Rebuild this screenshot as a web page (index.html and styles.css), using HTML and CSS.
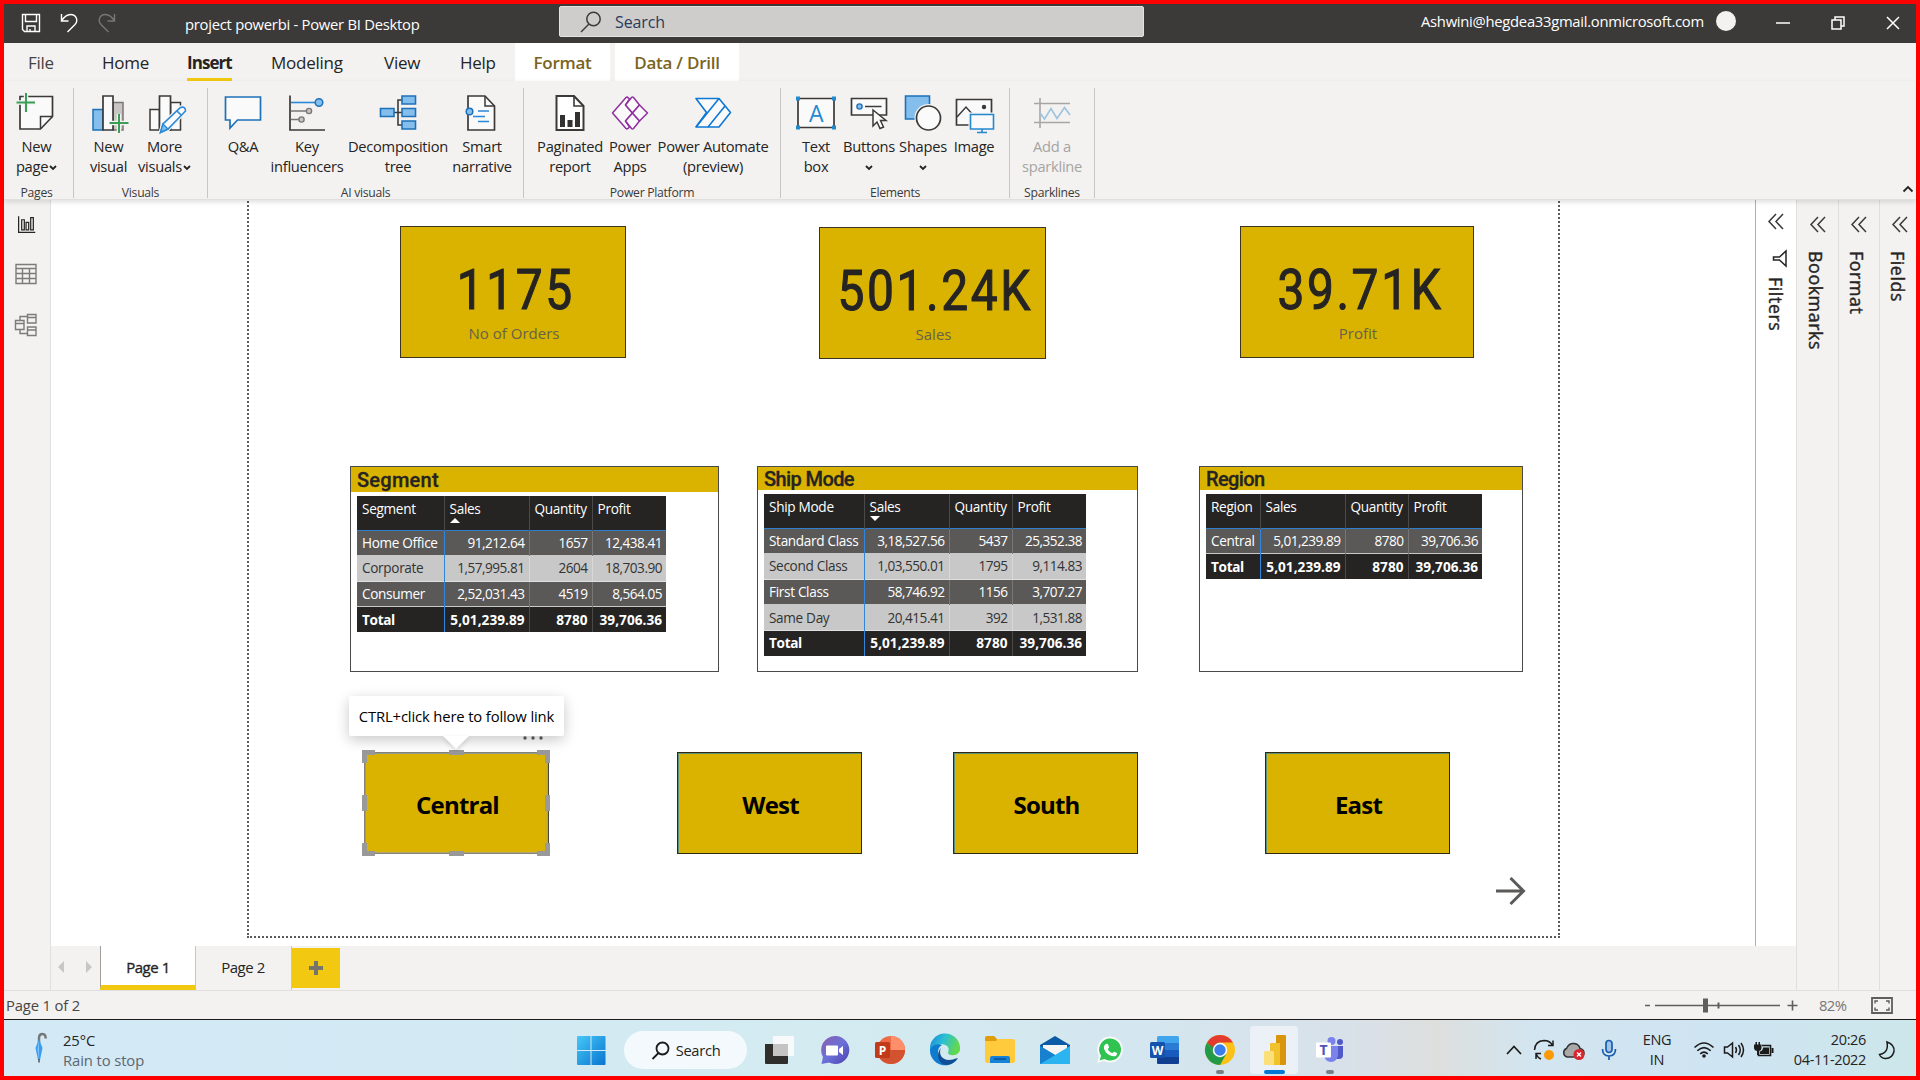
FILE: index.html
```html
<!DOCTYPE html>
<html lang="en">
<head>
<meta charset="utf-8">
<title>project powerbi - Power BI Desktop</title>
<link rel="stylesheet" href="styles.css">
</head>
<body>
<div class="screen">
  <header class="titlebar">
    <div class="quick">
      <svg width="20" height="20" viewBox="0 0 20 20"><path d="M1.5 1.5h17v17h-15l-2-2zM4.500 1.500v7h11v-7M6 18.500v-5.500h8v5.500M9 18v-2"/></svg>
      <svg width="20" height="20" viewBox="0 0 20 20"><path d="M2.500 1v7h7M2.500 8C5 4 8 1.500 11.500 1.500c6 0 8 6 4.500 10L8.500 19"/></svg>
      <svg class="dim" width="20" height="20" viewBox="0 0 20 20"><path d="M17.500 1v7h-7M17.500 8C15 4 12 1.500 8.500 1.500c-6 0-8 6-4.500 10l7.500 7.500"/></svg>
    </div>
    <div class="apptitle">project powerbi - Power BI Desktop</div>
    <div class="search">
      <svg width="22" height="22" viewBox="0 0 22 22"><circle cx="13.500" cy="8" r="6.700"/><path d="M9 13l-8 8"/></svg>
      <span>Search</span>
    </div>
    <div class="account">Ashwini@hegdea33gmail.onmicrosoft.com</div>
    <div class="avatar"></div>
    <div class="winbtns">
      <svg width="14" height="14" viewBox="0 0 14 14"><path d="M0 7h14"/></svg>
      <svg width="14" height="14" viewBox="0 0 14 14"><path d="M1 4h9v9h-9zM4 4v-3h9v9h-3"/></svg>
      <svg width="14" height="14" viewBox="0 0 14 14"><path d="M1 1l12 12M13 1l-12 12"/></svg>
    </div>
  </header>

  <nav class="tabs">
    <span class="tab t-file">File</span>
    <span class="tab t-home">Home</span>
    <span class="tab t-insert">Insert</span>
    <span class="tab t-modeling">Modeling</span>
    <span class="tab t-view">View</span>
    <span class="tab t-help">Help</span>
    <span class="tab ctx t-format">Format</span>
    <span class="tab ctx t-data">Data / Drill</span>
  </nav>

  <section class="ribbon">
    <div class="group g-pages">
      <div class="items">
        <div class="item w65">
          <svg class="ico" viewBox="-22 0 44 42"><path d="M-17 3.500H15.500V23.500L3.500 36H-17z" fill="#fafafa" stroke="#3b3a39" stroke-width="1.700"/><path d="M3.500 36V23.500H15.500" fill="none" stroke="#3b3a39" stroke-width="1.500"/><path d="M-20.500 9.500h18.500M-11 0v19" stroke="#f3f2f1" stroke-width="4.500"/><path d="M-20.500 9.500h18.500M-11 0v19" stroke="#3a9e57" stroke-width="2"/></svg>
          <span>New</span><span>page<svg class="chev" viewBox="0 0 8 6"><path d="M1 1l3 3 3-3"/></svg></span>
        </div>
      </div>
      <div class="gname">Pages</div>
    </div>
    <div class="group g-visuals">
      <div class="items">
        <div class="item w48">
          <svg class="ico" viewBox="-22 0 44 42"><path d="M-16 16.500h10V37h-10z" fill="#83beec" stroke="#1e71b8" stroke-width="1.500"/><path d="M4 9.500h10V37H4z" fill="#c8c6c4" stroke="#797775" stroke-width="1.500"/><path d="M-6 3H4V37H-6z" fill="#fafafa" stroke="#3b3a39" stroke-width="1.700"/><path d="M.5 30h19M10 21v19" stroke="#f3f2f1" stroke-width="4.500"/><path d="M.5 30h19M10 21v19" stroke="#3a9e57" stroke-width="2"/></svg>
          <span>New</span><span>visual</span>
        </div>
        <div class="item w64">
          <svg class="ico" viewBox="-22 0 44 42"><path d="M-15 16.500h9.500V37H-15zM5.500 9.500h10V37h-10z" fill="#fafafa" stroke="#3b3a39" stroke-width="1.500"/><path d="M-5.500 3h11V37h-11z" fill="#fafafa" stroke="#3b3a39" stroke-width="1.700"/><path d="M-4.500 39.500L-2 31 15.500 14.500q5-1.500 5 3.500L3 36z" fill="#fafafa" stroke="#f3f2f1" stroke-width="4"/><path d="M-4.500 39.500L-2 31 15.500 14.500q5-1.500 5 3.500L3 36zM12 18l4.500 4.500" fill="#fafafa" stroke="#2b88d8" stroke-width="1.600"/><path d="M-4.500 39.500L-2 31l5 5z" fill="#83beec" stroke="#2b88d8" stroke-width="1.400"/></svg>
          <span>More</span><span>visuals<svg class="chev" viewBox="0 0 8 6"><path d="M1 1l3 3 3-3"/></svg></span>
        </div>
      </div>
      <div class="gname">Visuals</div>
    </div>
    <div class="group g-ai">
      <div class="items">
        <div class="item w54">
          <svg class="ico" viewBox="-22 0 44 42"><path d="M-17.500 4h35V27H-5.500L-13 35v-8h-4.500z" fill="#fafafa" stroke="#1e71b8" stroke-width="1.700"/></svg>
          <span>Q&amp;A</span>
        </div>
        <div class="item w74">
          <svg class="ico" viewBox="-22 0 44 42"><path d="M-17 2.500V37H18" fill="none" stroke="#3b3a39" stroke-width="1.700"/><path d="M-16 9.500H9" stroke="#2b88d8" stroke-width="1.600"/><path d="M-16 18H0M-16 26.500h8" stroke="#797775" stroke-width="1.600"/><circle cx="12" cy="9.500" r="3.800" fill="#83beec" stroke="#1e71b8" stroke-width="1.500"/><g fill="#c8c6c4" stroke="#797775" stroke-width="1.400"><circle cx="2" cy="18" r="2.600"/><circle cx="-5.500" cy="26.500" r="2.600"/></g></svg>
          <span>Key</span><span>influencers</span>
        </div>
        <div class="item w108">
          <svg class="ico" viewBox="-22 0 44 42"><path d="M-4 19.500H5M5 7H0V32H5" fill="none" stroke="#3b3a39" stroke-width="1.600"/><path d="M-17.500 15.500h13.500v8h-13.500zM4 3h13.500v8H4zM4 15.500h13.500v8H4zM4 28h13.500v8H4z" fill="#83beec" stroke="#1e71b8" stroke-width="1.600"/></svg>
          <span>Decomposition</span><span>tree</span>
        </div>
        <div class="item w60">
          <svg class="ico" viewBox="-22 0 44 42"><path d="M-14 3H3L12.500 13V37H-14z" fill="#fafafa" stroke="#3b3a39" stroke-width="1.700"/><path d="M3 3v10h9.500" fill="none" stroke="#3b3a39" stroke-width="1.500"/><path d="M-4 18H7M-9 23.500H3M-4 28.500H7" stroke="#2b88d8" stroke-width="1.600"/><circle cx="-12.500" cy="18.500" r="3.300" fill="#83beec" stroke="#1e71b8" stroke-width="1.500"/></svg>
          <span>Smart</span><span>narrative</span>
        </div>
      </div>
      <div class="gname">AI visuals</div>
    </div>
    <div class="group g-platform">
      <div class="items">
        <div class="item w68">
          <svg class="ico" viewBox="-22 0 44 42"><path d="M-13.500 3H4L13.500 13V37h-27z" fill="#fff" stroke="#3b3a39" stroke-width="2"/><path d="M4 3v10h9.500" fill="none" stroke="#3b3a39" stroke-width="1.600"/><path d="M-10 22h5V34h-5zM-2.500 27h5v7h-5zM5 19h5V34H5z" fill="#323130"/></svg>
          <span>Paginated</span><span>report</span>
        </div>
        <div class="item w52">
          <svg class="ico" viewBox="-22 0 44 42"><g fill="#fafafa" stroke="#8f2f9e" stroke-width="1.500" stroke-linejoin="round"><path d="M-4 4.500Q-3 3.500-1.500 5L-.5 6-4.500 12 2.500 20-4.500 28l4 6-1 1Q-3 36.500-4 35.500L-17.500 20z"/><path d="M1.500 4.500q1-1 2 0L9.500 12 2.500 20-4.500 12z"/><path d="M2.500 20l7 8-6 7.500q-1 1-2 0L-4.500 28z"/><path d="M9.500 12l8 8-8 8-7-8z"/></g></svg>
          <span>Power</span><span>Apps</span>
        </div>
        <div class="item w114">
          <svg class="ico" viewBox="-22 0 44 42"><g fill="#fafafa" stroke="#0f78d4" stroke-width="1.600" stroke-linejoin="round"><path d="M-17 5.500H6L17.500 19.500 6 34h-23L-6.500 19.500z"/><path d="M6 5.500L-17 34M12 13L-5 34" fill="none"/></g></svg>
          <span>Power Automate</span><span>(preview)</span>
        </div>
      </div>
      <div class="gname">Power Platform</div>
    </div>
    <div class="group g-elements">
      <div class="items">
        <div class="item w56">
          <svg class="ico" viewBox="-22 0 44 42"><path d="M-18 5.500h36v29h-36z" fill="#fafafa" stroke="#3b3a39" stroke-width="1.700"/><path d="M-20 3.500h4v4h-4zM16 3.500h4v4h-4zM-20 32.500h4v4h-4zM16 32.500h4v4h-4z" fill="#1e8ad0"/><text class="glyph-a" x="0" y="28.500" text-anchor="middle">A</text></svg>
          <span>Text</span><span>box</span>
        </div>
        <div class="item w50">
          <svg class="ico" viewBox="-22 0 44 42"><path d="M-17.500 5.500h35v16.500h-35z" fill="#fafafa" stroke="#3b3a39" stroke-width="1.700"/><circle cx="-9.500" cy="13.500" r="2.600" fill="#83beec" stroke="#1e71b8" stroke-width="1.400"/><path d="M-4 13.500h16.500" stroke="#3b3a39" stroke-width="1.500"/><path d="M4 17v16l4-4 3 6.500 3.500-1.500-3-6.500h5.500z" fill="#fafafa" stroke="#3b3a39" stroke-width="1.500"/></svg>
          <span>Buttons</span><span><svg class="chev" viewBox="0 0 8 6"><path d="M1 1l3 3 3-3"/></svg></span>
        </div>
        <div class="item w58">
          <svg class="ico" viewBox="-22 0 44 42"><path d="M-17.500 3H6.500V26h-24z" fill="#83beec" stroke="#1e71b8" stroke-width="1.600"/><circle cx="5.500" cy="25" r="14" fill="#f3f2f1"/><circle cx="5.500" cy="25" r="12" fill="#fafafa" stroke="#3b3a39" stroke-width="1.700"/></svg>
          <span>Shapes</span><span><svg class="chev" viewBox="0 0 8 6"><path d="M1 1l3 3 3-3"/></svg></span>
        </div>
        <div class="item w44">
          <svg class="ico" viewBox="-22 0 44 42"><path d="M-17.500 6.500h35V32h-35z" fill="#fafafa" stroke="#3b3a39" stroke-width="1.700"/><path d="M-17 24l9-10 8 9" fill="none" stroke="#3b3a39" stroke-width="1.500"/><circle cx="10" cy="14" r="2.200" fill="#3b3a39"/><path d="M-5.500 19.500h27v18h-27z" fill="#f3f2f1"/><path d="M-3.500 21.500h23V36h-23zM8 36v3.500M3 39.500h10" fill="#fafafa" stroke="#2488cf" stroke-width="1.600"/></svg>
          <span>Image</span>
        </div>
      </div>
      <div class="gname">Elements</div>
    </div>
    <div class="group g-spark">
      <div class="items">
        <div class="item w86 off">
          <svg class="ico" viewBox="-22 0 44 42"><path d="M-18 10.500h36M-18 29.500h36M-12 5v30" stroke="#a8a6a4" stroke-width="1.600"/><path d="M-12 20l4.500 6L-1 15.500l6 10 7.500-11L18 22" fill="none" stroke="#9dc3dd" stroke-width="1.600"/></svg>
          <span>Add a</span><span>sparkline</span>
        </div>
      </div>
      <div class="gname">Sparklines</div>
    </div>
    <svg class="collapse" viewBox="0 0 12 8"><path d="M1.500 6.500L6 2l4.500 4.500"/></svg>
  </section>

  <main class="body">
    <aside class="rail">
      <svg width="24" height="24" viewBox="0 0 24 24" class="on"><path d="M3 2v18.500H22M6.500 6v11.500h3V6zM11.500 9v8.500h3V9zM16.800 3.500v14h3v-14z"/></svg>
      <svg width="24" height="24" viewBox="0 0 24 24"><path d="M2 2.500h20v19H2zM2 6.500h20M2 11.500h20M2 16.500h20M8.500 6.500v15M15.500 6.500v15"/></svg>
      <svg width="24" height="24" viewBox="0 0 24 24"><path d="M1.500 7.500h8.500v9H1.500zM1.500 10.500H10M13.500 1.500H22v8.500h-8.500zM13.500 4.500H22M13.500 14H22v8.500h-8.500zM13.500 17H22M6 7.500v-4h7.500M6 16.500v4h7.500"/></svg>
    </aside>
    <div class="center">
      <div class="work">
        <div class="canvas">
          <div class="page"></div>

          <div class="card c1"><b>1175</b><span>No of Orders</span></div>
          <div class="card c2"><b>501.24K</b><span>Sales</span></div>
          <div class="card c3"><b>39.71K</b><span>Profit</span></div>

          <div class="visual v1">
            <h2>Segment</h2>
            <table>
              <colgroup><col class="k87"><col class="k85"><col class="k63"><col class="k74"></colgroup>
              <tr class="head"><th>Segment</th><th>Sales<i class="up"></i></th><th>Quantity</th><th>Profit</th></tr>
              <tr class="dark"><td>Home Office</td><td>91,212.64</td><td>1657</td><td>12,438.41</td></tr>
              <tr class="light"><td>Corporate</td><td>1,57,995.81</td><td>2604</td><td>18,703.90</td></tr>
              <tr class="dark"><td>Consumer</td><td>2,52,031.43</td><td>4519</td><td>8,564.05</td></tr>
              <tr class="total"><td>Total</td><td>5,01,239.89</td><td>8780</td><td>39,706.36</td></tr>
            </table>
          </div>
          <div class="visual v2">
            <h2>Ship Mode</h2>
            <table>
              <colgroup><col class="k100"><col class="k85"><col class="k63"><col class="k74"></colgroup>
              <tr class="head"><th>Ship Mode</th><th>Sales<i class="down"></i></th><th>Quantity</th><th>Profit</th></tr>
              <tr class="dark"><td>Standard Class</td><td>3,18,527.56</td><td>5437</td><td>25,352.38</td></tr>
              <tr class="light"><td>Second Class</td><td>1,03,550.01</td><td>1795</td><td>9,114.83</td></tr>
              <tr class="dark"><td>First Class</td><td>58,746.92</td><td>1156</td><td>3,707.27</td></tr>
              <tr class="light"><td>Same Day</td><td>20,415.41</td><td>392</td><td>1,531.88</td></tr>
              <tr class="total"><td>Total</td><td>5,01,239.89</td><td>8780</td><td>39,706.36</td></tr>
            </table>
          </div>
          <div class="visual v3">
            <h2>Region</h2>
            <table>
              <colgroup><col class="k54"><col class="k85"><col class="k63"><col class="k74"></colgroup>
              <tr class="head"><th>Region</th><th>Sales</th><th>Quantity</th><th>Profit</th></tr>
              <tr class="dark"><td>Central</td><td>5,01,239.89</td><td>8780</td><td>39,706.36</td></tr>
              <tr class="total"><td>Total</td><td>5,01,239.89</td><td>8780</td><td>39,706.36</td></tr>
            </table>
          </div>

          <div class="navbtn b1">Central</div>
          <div class="navbtn b2">West</div>
          <div class="navbtn b3">South</div>
          <div class="navbtn b4">East</div>

          <svg class="handles" width="188" height="106" viewBox="0 0 188 106">
            <path d="M3 3H185.500V103H3z" fill="none" stroke="#a3a19a" stroke-width="1.500"/>
            <path d="M0 0h13v5H5v8H0zM188 0v13h-5V5h-8V0zM0 106V93h5v8h8v5zM188 106h-13v-5h8v-8h5zM87 0h15v5H87zM87 101h15v5H87zM0 45h5v16H0zM183 45h5v16h-5z" fill="#999"/>
          </svg>
          <svg class="more" width="22" height="6" viewBox="0 0 22 6"><circle cx="3" cy="3" r="1.700"/><circle cx="11" cy="3" r="1.700"/><circle cx="19" cy="3" r="1.700"/></svg>
          <div class="tooltip">CTRL+click here to follow link</div>
          <svg class="arrow" width="32" height="30" viewBox="0 0 32 30"><path d="M1 15H28M15.500 2L28.500 15 15.500 28"/></svg>
        </div>
        <aside class="filters">
          <svg class="dbl" viewBox="0 0 16 16"><path d="M8 .5L1 8l7 7.500M15 .5L8 8l7 7.500"/></svg>
          <svg class="funnel" width="15" height="17" viewBox="0 0 15 17"><path d="M14 1v15L7.500 10H1.500V7h6z"/></svg>
          <span>Filters</span>
        </aside>
      </div>
      <div class="pagetabs">
        <div class="pager"><i class="prev"></i><i class="next"></i></div>
        <div class="ptab active">Page 1</div>
        <div class="ptab">Page 2</div>
        <div class="addpage"><svg width="14" height="14" viewBox="0 0 14 14"><path d="M0 7h14M7 0v14"/></svg></div>
      </div>
    </div>
    <aside class="pane p1"><svg class="dbl" viewBox="0 0 16 16"><path d="M8 .5L1 8l7 7.500M15 .5L8 8l7 7.500"/></svg><span>Bookmarks</span></aside>
    <aside class="pane p2"><svg class="dbl" viewBox="0 0 16 16"><path d="M8 .5L1 8l7 7.500M15 .5L8 8l7 7.500"/></svg><span>Format</span></aside>
    <aside class="pane p3"><svg class="dbl" viewBox="0 0 16 16"><path d="M8 .5L1 8l7 7.500M15 .5L8 8l7 7.500"/></svg><span>Fields</span></aside>
  </main>

  <footer class="status">
    <span class="pageof">Page 1 of 2</span>
    <svg class="slider" width="156" height="20" viewBox="0 0 156 20"><path d="M0 10.500h5M10 10.500h125M142.500 10.500h10M147.500 5.500v10" stroke-width="1.600"/><path d="M58 3.500h5v14h-5zM72.500 7.500h2v6h-2z" class="solid"/></svg>
    <span class="pct">82%</span>
    <svg class="fit" width="22" height="17" viewBox="0 0 22 17"><path d="M1 1h20v15H1z" stroke-width="1.800"/><path d="M4 6.500V4h3M15 4h3v2.500M18 10.500V13h-3M7 13H4v-2.500" stroke-width="1.400"/></svg>
  </footer>

  <footer class="taskbar">
    <div class="weather">
      <svg width="12" height="30" viewBox="0 0 12 30"><path d="M4 11V5q0-4 3.500-4t3 4.500" fill="none" stroke="#777" stroke-width="2.500"/><path d="M4 6L.5 15 3 27h2l2.500-12z" fill="#3b9df0"/><path d="M4 8L2.500 16 4 27z" fill="#7cc4fb"/><path d="M4 26v3.500" stroke="#555" stroke-width="1.500"/></svg>
      <div class="forecast"><span>25°C</span><span class="cond">Rain to stop</span></div>
    </div>
    <div class="apps">
      <div class="app"><svg width="30" height="30" viewBox="0 0 30 30"><defs><linearGradient id="win" x1="0" y1="0" x2="1" y2="1"><stop offset="0" stop-color="#45c8f8"/><stop offset="1" stop-color="#0a74cf"/></linearGradient></defs><path d="M1 2q0-1 1-1h12.500v14H1zM15.500 1H28.500q1 0 1 1v13h-14zM1 16h13.500v14H2q-1 0-1-1zM15.500 16h14v13q0 1-1 1h-13z" fill="url(#win)"/></svg></div>
      <div class="pill"><svg width="19" height="19" viewBox="0 0 19 19"><circle cx="11.500" cy="7.500" r="6"/><path d="M7.500 12l-6 6"/></svg>Search</div>
      <div class="app"><svg width="30" height="30" viewBox="0 0 30 30"><path d="M0 9h23v19q0 1-1 1H1q-1 0-1-1z" fill="#2f2e2d"/><path d="M8 2q0-1 1-1h20v20H8z" fill="#fbfbfb" opacity=".9"/><path d="M8 9h15v12H8z" fill="#c4c4c4"/></svg></div>
      <div class="app"><svg width="30" height="30" viewBox="0 0 30 30"><defs><linearGradient id="chat" x1="0" y1="0" x2="1" y2="1"><stop offset="0" stop-color="#8b5cae"/><stop offset=".5" stop-color="#6b71d8"/><stop offset="1" stop-color="#4b3fae"/></linearGradient></defs><path d="M15 1a14 14 0 1 1-6 26.500L1.500 29 3 22A14 14 0 0 1 15 1z" fill="url(#chat)"/><path d="M7 10.500h10q1 0 1 1v8q0 1-1 1H7q-1 0-1-1v-8q0-1 1-1zM19 14l4-3v9l-4-3z" fill="#fff"/></svg></div>
      <div class="app"><svg width="30" height="30" viewBox="0 0 30 30"><circle cx="16" cy="15" r="14" fill="#ed6c47"/><path d="M16 1a14 14 0 0 1 14 14H16z" fill="#ff8f6b"/><path d="M2 15h28A14 14 0 0 1 2 15z" fill="#d35230"/><rect x="0" y="7" width="15" height="16" rx="1.500" fill="#c13b1b"/><text class="logo" x="7.500" y="19.500" text-anchor="middle">P</text></svg></div>
      <div class="app"><svg width="32" height="32" viewBox="0 0 32 32"><defs><linearGradient id="edge" x1="0" y1="0" x2="1" y2=".3"><stop offset="0" stop-color="#1b86d8"/><stop offset=".5" stop-color="#2bc0d6"/><stop offset="1" stop-color="#62d84e"/></linearGradient></defs><path d="M1 16A15 15 0 0 1 31 13c1 6-4 9-9 8-3-.5-3.500-2-2.500-4 1.500-5-5-8-10.500-6-4 1.500-7 4-8 8z" fill="url(#edge)"/><path d="M1 16c2-5 7-7 12-5-4 2-5 7-3 12 2 4 6 7 11 7.500A15 15 0 0 1 1 16z" fill="#0c7bd0"/><path d="M12 14c-3 6 1 14 12 11.500q4-1.500 5-1.500c-2 3.500-6 7-12 7C10 30 6 21 12 14z" fill="#0f4f95"/></svg></div>
      <div class="app"><svg width="30" height="30" viewBox="0 0 30 30"><path d="M0 3q0-2 2-2h7l3 3v6H0z" fill="#e09d07"/><path d="M0 6h11l2-2h15q2 0 2 2v20q0 2-2 2H2q-2 0-2-2z" fill="#ffcb3d"/><path d="M5 28v-5q0-2 2-2h16q2 0 2 2v5z" fill="#1583d7"/><path d="M9 24h12" stroke="#0b4f92" stroke-width="1.500"/></svg></div>
      <div class="app"><svg width="30" height="30" viewBox="0 0 30 30"><path d="M0 10L15 1l15 9v3H0z" fill="#0a5aa5"/><path d="M3 10h24v12H3z" fill="#f4f4f4"/><path d="M0 11l15 9v9H0z" fill="#1a8fe0"/><path d="M30 11L0 29h30z" fill="#2cb4f0"/><path d="M0 11l15 9L0 29z" fill="#1781d0"/></svg></div>
      <div class="app"><svg width="30" height="30" viewBox="0 0 30 30"><path d="M15.500 1.500a13 13 0 1 1-6.500 24.500L2 28l2-7A13 13 0 0 1 15.500 1.500z" fill="#f7faf8"/><path d="M15.500 3.500a11 11 0 1 1-6 20.500L4.700 25.300l1.400-4.600A11 11 0 0 1 15.500 3.500z" fill="#2fc351"/><path d="M11 9c2-1 2 0 3 3 .3 1-1.500 1.500-1 2.500 1 2 2.500 3 4 3.500 1 .3 1.500-1.500 2.300-1.200 3 1.200 3 1.500 2.500 3-1 2-4 2-7 .5-3-1.500-5-4-5.800-6.500C8.500 11.500 9.500 9.500 11 9z" fill="#fff"/></svg></div>
      <div class="app"><svg width="30" height="30" viewBox="0 0 30 30"><rect x="7" y="1" width="22" height="28" rx="1.500" fill="#41a5ee"/><path d="M7 8h22v7H7z" fill="#2b7cd3"/><path d="M7 15h22v7H7z" fill="#185abd"/><path d="M7 22h22v5.500q0 1.500-1.500 1.500h-19Q7 29 7 27.500z" fill="#103f91"/><rect x="0" y="7" width="15" height="16" rx="1.500" fill="#1552ae"/><text class="logo" x="7.500" y="19.500" text-anchor="middle">W</text></svg></div>
      <div class="app dot"><svg width="30" height="30" viewBox="0 0 30 30"><circle cx="15" cy="15" r="15" fill="#fbc116"/><path d="M2 7.500A15 15 0 0 0 15 30l6.500-11.500H8.500z" fill="#229a48"/><path d="M2 7.500L8.500 18.500 15 7.500z" fill="#229a48"/><path d="M2 7.500A15 15 0 0 1 28 7.500H15q-5 0-6.500 5z" fill="#e33b2e"/><circle cx="15" cy="15" r="7.200" fill="#fff"/><circle cx="15" cy="15" r="5.700" fill="#3b7ded"/></svg></div>
      <div class="app current"><svg width="24" height="32" viewBox="0 0 24 32"><path d="M13 2q0-1 1-1h8q1 0 1 1v28q0 1-1 1h-9z" fill="#d9960d"/><path d="M7 10q0-1 1-1h8q1 0 1 1v21H7z" fill="#f0c22e"/><path d="M1 18q0-1 1-1h8q1 0 1 1v13H2q-1 0-1-1z" fill="#fbe07a"/></svg></div>
      <div class="app dot"><svg width="28" height="26" viewBox="0 0 28 26"><circle cx="15.500" cy="4" r="4" fill="#7b83eb"/><circle cx="24" cy="5" r="3" fill="#5059c9"/><path d="M20 9h7v9q0 4-4 4h-3z" fill="#5059c9"/><path d="M8 9h14v9q-1 7-7 7t-7-7z" fill="#7b83eb"/><rect x="0" y="5.500" width="15" height="15" rx="1" fill="#fff"/><text class="logo teams" x="7.500" y="18" text-anchor="middle">T</text></svg></div>
    </div>
    <div class="tray">
      <svg class="c30" height="24" viewBox="-15 -12 30 24"><path d="M-7 4L0-3.500 7 4" stroke-width="1.700"/></svg>
      <svg class="c30" height="24" viewBox="-15 -12 30 24"><path d="M-9.500 0Q-9-9 0-9.500q6 0 8.500 5M9-9.500v5H4M-3 9q-3-1-5-5M-8 9V3.500h5" stroke-width="1.500"/><circle cx="5" cy="5" r="5" fill="#fb9a06" stroke="none"/></svg>
      <svg class="c30" height="24" viewBox="-15 -12 30 24"><path d="M-7 7a4.500 4.500 0 0 1-.5-8.500Q-5-7 0-6.500q5 .5 6 5 4 1 4 4.500t-4 4z" fill="#a9a9a9" stroke="#333" stroke-width="1.500"/><circle cx="5" cy="4.500" r="5.500" fill="#d9252d" stroke="none"/><path d="M3 2.500l4 4M7 2.500l-4 4" stroke="#fff" stroke-width="1.400"/></svg>
      <svg class="c40" height="24" viewBox="-20 -12 40 24"><g stroke="#1b5cab" stroke-width="1.700"><rect x="-3" y="-9.500" width="6" height="12" rx="3" fill="#9dc4ea"/><path d="M-6.500-1Q-6.500 6 0 6t6.500-7M0 6v4"/></g></svg>
      <div class="lang"><span>ENG</span><span>IN</span></div>
      <svg class="c30" height="24" viewBox="-15 -12 30 24"><path d="M-9.500-2.500q9.500-9 19 0M-6.700.8q6.700-6.500 13.400 0M-3.800 3.800q3.800-3.500 7.600 0" stroke-width="1.600"/><circle cx="0" cy="6" r="1.800" fill="#1b1b1b" stroke="none"/></svg>
      <svg class="c30" height="24" viewBox="-15 -12 30 24"><path d="M-9.500-3h3l5-4V7l-5-4h-3zM1.500-3q2 3 0 6M4.500-5q3.500 5 0 10M7-7q5 7 0 14" stroke-width="1.500"/></svg>
      <svg class="c30" height="24" viewBox="-15 -12 30 24"><path d="M-2-4.500H6.500V5.500h-12V1" stroke-width="1.600"/><path d="M-1-2.500h6V4h-9V1.500q3-1 3-4zM7.500-2H9.500V3H7.500zM-10-5.500h7.500v3q0 3-2.500 3.500V5h-2V1Q-10 .5-10-2.500zM-8.500-8h1.500v3h-1.500zM-5.500-8H-4v3h-1.500z" fill="#1b1b1b" stroke="none"/></svg>
      <div class="clock"><span>20:26</span><span>04-11-2022</span></div>
      <svg class="c30" height="24" viewBox="-15 -12 30 24"><path d="M0-8Q8-5 7 1.500 5 9-2 8.500-6 8-7.500 4.500 2 3 0-8z" stroke-width="1.500"/></svg>
    </div>
  </footer>
</div>
</body>
</html>
```
FILE: styles.css
```css
* { box-sizing: border-box; }
body { margin: 0; font-family: "Open Sans", "Noto Sans", sans-serif; color: #252423; overflow: hidden; }
svg { flex: none; display: block; overflow: visible; }
.screen { width: 1920px; height: 1080px; border: 4px solid #f00; display: flex; flex-direction: column; background: #f3f2f1; }

/* title bar */
.titlebar { height: 39px; background: #3b3a39; color: #fff; display: flex; align-items: flex-start; flex: none; }
.quick { display: flex; gap: 18px; padding: 9px 0 0 17px; width: 181px; }
.quick svg { fill: none; stroke: #fff; stroke-width: 1.4; }
.quick .dim { stroke: #797775; }
.apptitle { width: 374px; line-height: 40px; font-size: 14.800px; letter-spacing: -.26px; white-space: nowrap; }
.search { width: 585px; height: 31px; margin-top: 2px; background: #cecdcb; border: 1px solid #e4e3e2; border-radius: 2px; display: flex; align-items: center; gap: 13px; padding-left: 20px; color: #2b3a5c; font-size: 16px; letter-spacing: -.1px; }
.search svg { fill: none; stroke: #3b3a39; stroke-width: 1.5; }
.account { margin-left: 277px; width: 282px; line-height: 35px; font-size: 14.800px; letter-spacing: -.28px; white-space: nowrap; }
.avatar { width: 20px; height: 20px; border-radius: 50%; background: #f3f2f1; margin: 7px 0 0 13px; }
.winbtns { display: flex; gap: 41px; padding: 12px 0 0 40px; }
.winbtns svg { fill: none; stroke: #fff; stroke-width: 1.5; }

/* ribbon tabs */
.tabs { height: 38px; display: flex; flex: none; font-size: 17px; letter-spacing: -.25px; }
.tab { line-height: 39px; white-space: nowrap; }
.t-file { margin-left: 24px; width: 74px; color: #444; }
.t-home { width: 85px; }
.t-insert { width: 45px; margin-right: 39px; font-weight: 700; letter-spacing: -.95px; border-bottom: 3px solid #f2c811; }
.t-modeling { width: 113px; }
.t-view { width: 76px; }
.t-help { width: 55px; }
.ctx { background: #fff; color: #7a6420; font-weight: 600; letter-spacing: -.25px; text-align: center; }
.t-format { width: 95px; margin-right: 5px; }
.t-data { width: 124px; }

/* ribbon */
.ribbon { height: 119px; display: flex; flex: none; padding-top: 7px; position: relative; z-index: 2; background: #f3f2f1; border-bottom: 1px solid #e1dfdd; box-shadow: 0 2px 5px rgba(0,0,0,.13); }
.group { height: 110px; border-right: 1px solid #c8c6c4; display: flex; flex-direction: column; flex: none; }
.g-pages { width: 70px; } .g-visuals { width: 134px; } .g-ai { width: 316px; } .g-platform { width: 257px; } .g-elements { width: 229px; } .g-spark { width: 85px; }
.items { display: flex; height: 92px; flex: none; justify-content: center; padding-top: 5px; }
.g-pages .items { justify-content: flex-start; }
.g-ai .items { padding-right: 3px; }
.g-platform .items { padding-left: 2px; }
.g-elements .items { padding-right: 6px; }
.g-pages .gname { padding-right: 4px; }
.item { display: flex; flex-direction: column; align-items: center; flex: none; font-size: 14.700px; letter-spacing: -.28px; line-height: 20px; white-space: nowrap; }
.ico { width: 44px; height: 42px; margin-bottom: 1px; }
.gname { flex: none; text-align: center; font-size: 12.200px; line-height: 16px; letter-spacing: -.28px; color: #3b3a39; margin-top: 5px; }
.off { color: #a6a4a2; }
.w44 { width: 44px; } .w48 { width: 48px; } .w50 { width: 50px; } .w52 { width: 52px; } .w54 { width: 54px; } .w56 { width: 56px; } .w58 { width: 58px; }
.w60 { width: 60px; } .w64 { width: 64px; } .w65 { width: 65px; } .w68 { width: 68px; } .w74 { width: 74px; } .w86 { width: 85px; } .w108 { width: 108px; } .w114 { width: 114px; }
.chev { display: inline-block; width: 8px; height: 6px; margin-left: 1px; vertical-align: 1px; fill: none; stroke: #252423; stroke-width: 1.8; }
.g-elements .chev { margin-left: 0; }
.glyph-a { font-size: 23px; fill: #1e8ad0; }
.collapse { width: 12px; height: 8px; margin: 97px 2px 0 auto; fill: none; stroke: #252423; stroke-width: 1.8; }

/* work area */
.body { flex: 1; display: flex; min-height: 0; }
.rail { width: 47px; border-right: 1px solid #e1dfdd; padding: 13px 0 0 10px; display: flex; flex-direction: column; gap: 26px; }
.rail svg { fill: none; stroke: #7d7b79; stroke-width: 1.4; }
.rail svg:nth-child(2) { margin: -1px 0 1px; }
.rail .on { stroke: #252423; width: 21px; margin-left: 2px; }
.center { width: 1745px; display: flex; flex-direction: column; }
.work { height: 746px; display: flex; background: #fff; }
.canvas { width: 1704px; position: relative; overflow: hidden; background: #fff; }
.page { position: absolute; left: 196px; top: -2px; width: 1313px; height: 740px; border: 2px dotted #5c5a58; }

.card { position: absolute; height: 132px; background: #d9b300; border: 1px solid #3a3420; display: flex; flex-direction: column; align-items: center; }
.card b { font: 400 55px/64px Roboto, sans-serif; letter-spacing: 3px; transform: scaleX(.87); margin: 31px 0 0 6px; -webkit-text-stroke: 1.1px #252423; }
.card span { font-size: 15px; line-height: 20px; margin: 1px 0 0 2px; color: #66624a; }
.c1 { left: 349px; top: 26px; width: 226px; }
.c2 { left: 768px; top: 27px; width: 227px; }
.c3 { left: 1189px; top: 26px; width: 234px; }

.visual { position: absolute; top: 266px; height: 206px; border: 1px solid #4a4a4a; background: #fff; }
.visual h2 { margin: 0; padding-left: 6px; height: 23px; background: #d9b300; font: 500 20px/24px Roboto, sans-serif; -webkit-text-stroke: .3px #252423; letter-spacing: -.6px; overflow: hidden; }
.v1 { left: 299px; width: 369px; }
.v2 { left: 706px; width: 381px; }
.v3 { left: 1148px; width: 324px; }
.visual table { margin: 4px 0 0 6px; border-collapse: collapse; table-layout: fixed; font-size: 13.600px; }
.v1 h2 { height: 25px; line-height: 27px; letter-spacing: .25px; }
.k54 { width: 54px; } .k63 { width: 63px; } .k74 { width: 74px; } .k85 { width: 85px; } .k87 { width: 87px; } .k100 { width: 100px; }
.v1 table { width: 309px; } .v2 table { width: 322px; } .v3 table { width: 276px; }
th, td { padding: 0 4px; white-space: nowrap; text-align: right; font-weight: 400; border-right: 1px solid #777; }
th:last-child, td:last-child { border-right: 0; }
th { text-align: left; vertical-align: top; padding: 3px 0 0 5px; line-height: 20px; letter-spacing: -.3px; border-right-color: #4a4a4a; position: relative; }
td { height: 25.6px; line-height: 24px; letter-spacing: -.5px; }
.head { background: #252423; color: #fff; height: 34px; border-bottom: 1px solid #2f7fcf; }
.dark { background: #5b5957; color: #fff; border-bottom: 1px solid #c8c8c8; }
.light { background: #c8c8c8; color: #333; border-bottom: 1px solid #e0e0e0; }
.total { background: #252423; color: #fff; }
.total td { font-weight: 700; letter-spacing: .03px; border-right-color: #4a4a4a; }
.light td { border-right-color: #d8d8d8; }
tr td:first-child { text-align: left; letter-spacing: -.33px; padding-left: 5px; border-right: 1px solid #2f86dc; }
.up, .down { position: absolute; left: 5px; top: 22px; border: 5px solid transparent; border-top: 0; border-bottom: 5px solid #fff; }
.down { border-bottom: 0; border-top: 5px solid #fff; }

.navbtn { position: absolute; top: 552px; width: 185px; height: 102px; background: #d9b300; border: 1px solid #2e2a12; box-shadow: inset 1px 1px 0 #5f8f78; line-height: 103px; padding-left: 2px; text-align: center; font-size: 24px; font-weight: 700; letter-spacing: -.8px; color: #000; }
.b1 { left: 313px; } .b2 { left: 626px; } .b3 { left: 902px; } .b4 { left: 1214px; }
.handles { position: absolute; left: 311px; top: 550px; }
.more { position: absolute; left: 471px; top: 535px; fill: #605e5c; }
.tooltip { position: absolute; left: 298px; top: 496px; width: 215px; height: 40px; line-height: 41px; background: #fff; border-radius: 2px; box-shadow: 0 4px 14px rgba(0,0,0,.22); text-align: center; font-size: 14.800px; letter-spacing: -.14px; color: #000; white-space: nowrap; }
.tooltip::after { content: ""; position: absolute; left: 94px; top: 40px; border: 13px solid transparent; border-top-color: #fff; border-bottom: 0; filter: drop-shadow(0 2px 2px rgba(0,0,0,.15)); }
.arrow { position: absolute; left: 1444px; top: 676px; fill: none; stroke: #5c5a58; stroke-width: 3; }

.filters { width: 41px; border-left: 1px solid #b3b0ad; display: flex; flex-direction: column; align-items: center; padding-top: 13px; }
.filters span, .pane span { writing-mode: vertical-rl; font-size: 17.800px; letter-spacing: .6px; line-height: 22px; -webkit-text-stroke: .4px #252423; }
.dbl { width: 16px; height: 17px; fill: none; stroke: #3b3a39; stroke-width: 1.5; }
.funnel { margin: 20px 0 10px 6px; fill: none; stroke: #252423; stroke-width: 1.5; }
.pane { width: 41px; border-left: 1px solid #e1dfdd; display: flex; flex-direction: column; align-items: center; padding-top: 16px; }
.pane .dbl { margin-bottom: 18px; }
.pane span { margin-right: 4px; }
.p1 { width: 42px; } .p3 { width: 37px; }
.p3 .dbl { margin-left: 4px; }
.p3 span { margin-right: 1px; }

/* page tabs */
.pagetabs { height: 44px; display: flex; font-size: 15px; letter-spacing: -.45px; }
.pager { width: 49px; display: flex; align-items: center; justify-content: space-between; padding: 0 8px 2px 7px; }
.prev, .next { border: 6px solid transparent; border-left: 0; border-right: 6px solid #c8c6c4; }
.next { border-right: 0; border-left: 6px solid #c8c6c4; }
.ptab { width: 96px; line-height: 42px; text-align: center; border-right: 1px solid #c8c6c4; padding-right: 1px; }
.active { background: #fff; border-left: 1px solid #a19f9d; border-bottom: 5px solid #f2c811; -webkit-text-stroke: .35px #252423; padding-right: 0; }
.addpage { width: 48px; height: 40px; margin-top: 2px; background: #f2c811; display: flex; align-items: center; justify-content: center; }
.addpage svg { stroke: #77756b; stroke-width: 4; }

/* status bar */
.status { height: 30px; border-top: 1px solid #e1dfdd; border-bottom: 1px solid #1b1b1b; flex: none; display: flex; align-items: center; font-size: 14.800px; letter-spacing: -.15px; color: #484644; padding-left: 2px; }
.slider { margin-left: auto; stroke: #605e5c; fill: none; }
.slider .solid { fill: #605e5c; stroke: none; }
.pct { width: 30px; margin: -1px 22px 0 18px; color: #797775; letter-spacing: -.6px; }
.fit { margin-right: 23px; fill: none; stroke: #605e5c; }

/* taskbar */
.taskbar { height: 56px; flex: none; display: flex; align-items: stretch; background: linear-gradient(90deg, #d3eaf6 0%, #d3e9f4 22%, #d3ebf1 42%, #d4e6ef 60%, #d8e1ea 70%, #dddfdd 75%, #d2e5f0 80%, #cfe4f2 90%, #cce7ea 100%); }
.weather { width: 546px; display: flex; align-items: center; padding-left: 31px; gap: 16px; }
.forecast { margin-top: 3px; }
.forecast span { display: block; line-height: 20px; font-size: 14.800px; letter-spacing: -.1px; }
.forecast .cond { color: #5b6670; }
.apps { display: flex; align-items: center; }
.app { width: 55px; height: 56px; display: flex; align-items: center; justify-content: center; position: relative; padding-top: 4px; }
.app:first-child { width: 74px; padding-left: 8px; }
.pill { width: 123px; height: 38px; margin: 4px 5px 0 0; border-radius: 19px; background: #f3f9fc; display: flex; align-items: center; justify-content: center; gap: 6px; font-size: 14.700px; letter-spacing: -.3px; }
.pill svg { fill: none; stroke: #1b1b1b; stroke-width: 1.8; }
.dot::after, .current::after { content: ""; position: absolute; left: 24px; bottom: 2px; width: 8px; height: 4px; border-radius: 2px; background: #7b8085; }
.current::before { content: ""; position: absolute; inset: 6px 4px 2px 3px; background: #ecf1f8; border-radius: 4px; }
.current svg { position: relative; }
.current::after { left: 17px; width: 21px; background: #0078d4; }
.logo { font-size: 12px; font-weight: 700; fill: #fff; }
.teams { fill: #4b53bc; font-size: 14px; }
.tray { margin-left: auto; display: flex; align-items: center; padding: 4px 14px 0 0; font-size: 14.500px; letter-spacing: -.35px; line-height: 20px; }
.tray svg { fill: none; stroke: #1b1b1b; }
.c30 { width: 30px; } .c40 { width: 40px; }
.tray span { display: block; }
.lang { width: 56px; margin-right: 4px; text-align: center; }
.clock { width: 87px; margin-right: 6px; text-align: right; white-space: nowrap; }
```
